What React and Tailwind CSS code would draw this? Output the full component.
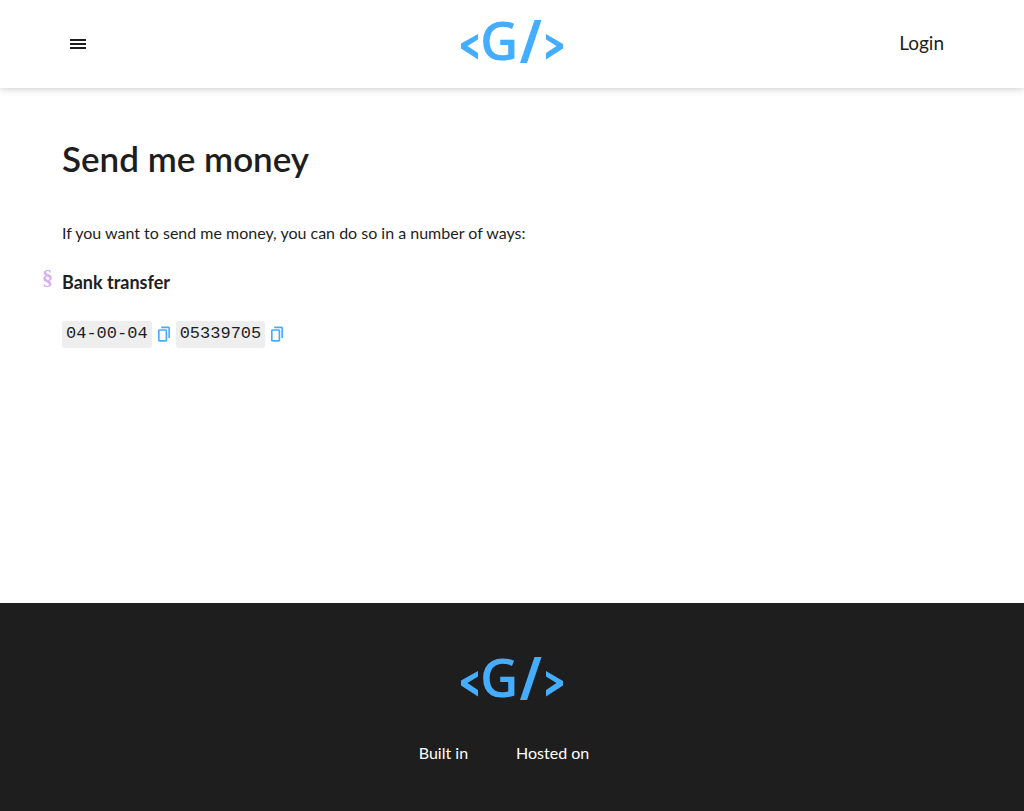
import React from "react";

function Logo() {
  return (
    <svg width="104" height="44" viewBox="0 0 104 44" role="img" aria-label="Home" fill="#45adff" className="overflow-visible">
      <polygon points="18,14 18,19.5 7.5,26 18,33 18,39.5 1,28.5 1,23.5" />
      <text x="20" y="40" className="font-['Open_Sans',sans-serif] text-[53px] font-semibold">G</text>
      <polygon points="74.5,0 81.5,0 67,43 60,43" />
      <polygon points="86,14 103,24 103,28.5 86,39.5 86,33 96.5,26 86,19.5" />
    </svg>
  );
}

function CopyIcon() {
  return (
    <svg width="12" height="16" viewBox="0 0 12 16" fill="none" stroke="#45adff" strokeWidth="1.7" aria-hidden="true">
      <rect x="0.8" y="4" width="7.6" height="10.8" rx="0.8" />
      <path d="M3.2 1.3H10.2Q11.2 1.3 11.2 2.3V12" />
    </svg>
  );
}

function CopyCode({ label, value }) {
  return (
    <span className="flex items-center gap-1.5">
      <code className="rounded-[3px] bg-[#eeeeee] px-1 pb-0.5 font-['Liberation_Mono',monospace] text-[17px] leading-[25px]">
        {value}
      </code>
      <button type="button" aria-label={label} className="cursor-pointer pb-0.5" onClick={() => navigator.clipboard?.writeText(value)}>
        <CopyIcon />
      </button>
    </span>
  );
}

export default function App() {
  return (
    <div className="flex min-h-screen flex-col bg-white font-['Lato',sans-serif] text-base text-[#1e1e1e]">
      <header className="grid h-22 grid-cols-3 items-center px-[62px] shadow-[0_0_8px_rgba(0,0,0,0.25)]">
        <button type="button" aria-label="Menu" className="flex size-8 items-center justify-center">
          <svg width="16" height="10" viewBox="0 0 16 10" fill="#1e1e1e" aria-hidden="true">
            <path d="M0 0h16v2H0zM0 4h16v2H0zM0 8h16v2H0z" />
          </svg>
        </button>
        <a href="#home" className="justify-self-center pb-1">
          <Logo />
        </a>
        <a href="#login" className="mr-[18px] justify-self-end pb-0.5 text-[19px]">Login</a>
      </header>
      <main className="grow px-[62px] pt-[46px]">
        <h1 className="text-[35px] leading-12 font-semibold">Send me money</h1>
        <p className="mt-[39px] leading-6">If you want to send me money, you can do so in a number of ways:</p>
        <h2 className="relative mt-[25px] text-lg leading-6 font-bold">
          <a href="#bank" aria-label="Link to this section" className="absolute -top-1 -left-5 font-['Liberation_Serif',serif] text-[22px] font-bold text-[#d8aef0]">§</a>
          Bank transfer
        </h2>
        <div className="mt-[27px] flex gap-1.5">
          <CopyCode label="Copy sort code" value="04-00-04" />
          <CopyCode label="Copy account number" value="05339705" />
        </div>
      </main>
      <footer className="flex flex-col items-center bg-[#1e1e1e] px-6 pt-[54px] pb-[46px] text-white">
        <a href="#home">
          <Logo />
        </a>
        <div className="mt-10 flex gap-12 pr-4 leading-6">
          <span>Built in</span>
          <span>Hosted on</span>
        </div>
      </footer>
    </div>
  );
}
